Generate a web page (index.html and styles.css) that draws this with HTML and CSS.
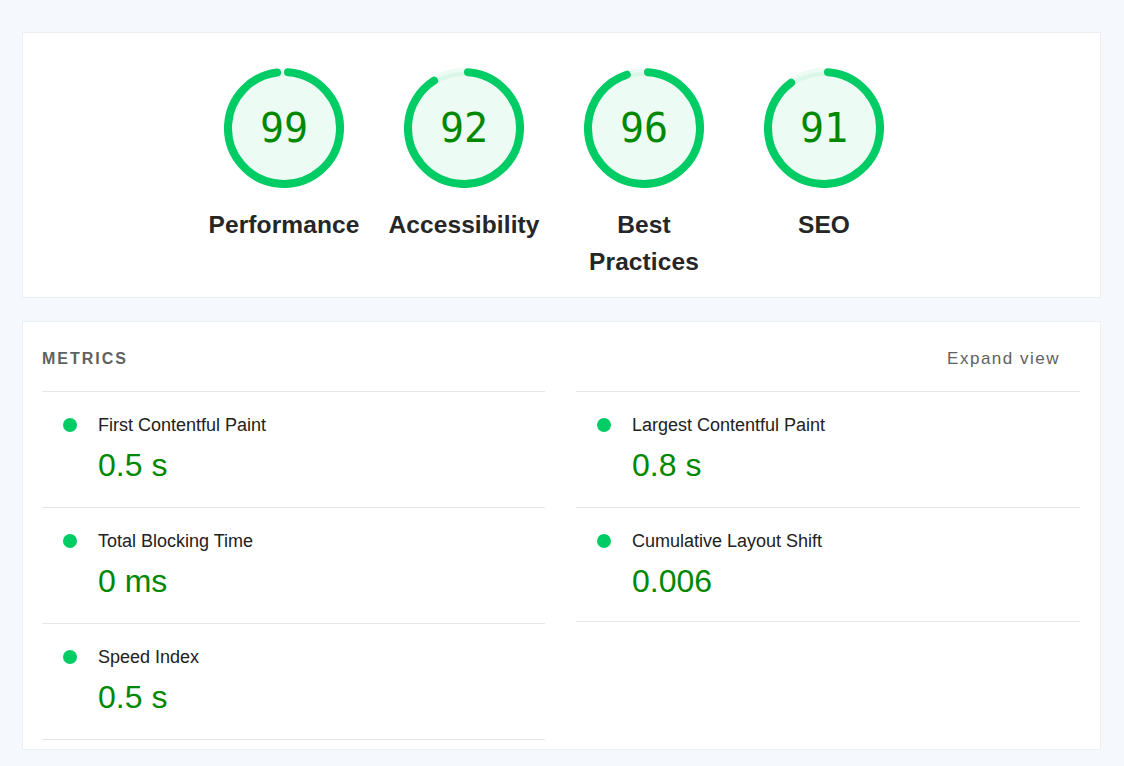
FILE: index.html
```html
<!DOCTYPE html>
<html lang="en">
<head>
<meta charset="utf-8">
<title>Lighthouse report</title>
<link rel="stylesheet" href="styles.css">
</head>
<body>
<div class="page">
  <section class="card scores">
    <div class="gauge">
      <svg class="ring" viewBox="0 0 120 120" width="120" height="120">
        <circle class="ring-base" cx="60" cy="60" r="56"></circle>
        <circle class="ring-arc" cx="60" cy="60" r="56" stroke-dasharray="340.34 351.86" transform="rotate(-85.9 60 60)"></circle>
        <text class="ring-num" x="60" y="60">99</text>
      </svg>
      <div class="gauge-label">Performance</div>
    </div>
    <div class="gauge">
      <svg class="ring" viewBox="0 0 120 120" width="120" height="120">
        <circle class="ring-base" cx="60" cy="60" r="56"></circle>
        <circle class="ring-arc" cx="60" cy="60" r="56" stroke-dasharray="315.71 351.86" transform="rotate(-85.9 60 60)"></circle>
        <text class="ring-num" x="60" y="60">92</text>
      </svg>
      <div class="gauge-label">Accessibility</div>
    </div>
    <div class="gauge">
      <svg class="ring" viewBox="0 0 120 120" width="120" height="120">
        <circle class="ring-base" cx="60" cy="60" r="56"></circle>
        <circle class="ring-arc" cx="60" cy="60" r="56" stroke-dasharray="329.78 351.86" transform="rotate(-85.9 60 60)"></circle>
        <text class="ring-num" x="60" y="60">96</text>
      </svg>
      <div class="gauge-label">Best Practices</div>
    </div>
    <div class="gauge">
      <svg class="ring" viewBox="0 0 120 120" width="120" height="120">
        <circle class="ring-base" cx="60" cy="60" r="56"></circle>
        <circle class="ring-arc" cx="60" cy="60" r="56" stroke-dasharray="312.19 351.86" transform="rotate(-85.9 60 60)"></circle>
        <text class="ring-num" x="60" y="60">91</text>
      </svg>
      <div class="gauge-label">SEO</div>
    </div>
  </section>

  <section class="card metrics">
    <header class="metrics-head">
      <h2 class="metrics-title">METRICS</h2>
      <span class="expand">Expand view</span>
    </header>
    <div class="metrics-grid">
      <div class="metric-col">
        <div class="metric">
          <span class="dot"></span>
          <div class="metric-label">First Contentful Paint</div>
          <div class="metric-value">0.5&nbsp;s</div>
        </div>
        <div class="metric">
          <span class="dot"></span>
          <div class="metric-label">Total Blocking Time</div>
          <div class="metric-value">0&nbsp;ms</div>
        </div>
        <div class="metric">
          <span class="dot"></span>
          <div class="metric-label">Speed Index</div>
          <div class="metric-value">0.5&nbsp;s</div>
        </div>
      </div>
      <div class="metric-col">
        <div class="metric">
          <span class="dot"></span>
          <div class="metric-label">Largest Contentful Paint</div>
          <div class="metric-value">0.8&nbsp;s</div>
        </div>
        <div class="metric metric-short">
          <span class="dot"></span>
          <div class="metric-label">Cumulative Layout Shift</div>
          <div class="metric-value">0.006</div>
        </div>
      </div>
    </div>
  </section>
</div>
</body>
</html>
```

FILE: styles.css
```css
* {
  box-sizing: border-box;
}

html, body {
  margin: 0;
  padding: 0;
}

body {
  background: #f5f9fd;
  font-family: "Liberation Sans", Arial, Helvetica, sans-serif;
  color: #212121;
  width: 1124px;
  height: 766px;
  overflow: hidden;
}

.page {
  padding: 32px 23px 0 22px;
  display: flex;
  flex-direction: column;
  gap: 23px;
}

.card {
  background: #ffffff;
  border: 1px solid #edf0f3;
}

/* ---- Score gauges ---- */
.scores {
  display: flex;
  justify-content: center;
  gap: 20px;
  padding: 35px 15px 17px 0;
}

.gauge {
  width: 160px;
  display: flex;
  flex-direction: column;
  align-items: center;
}

.ring {
  display: block;
  width: 120px;
  height: 120px;
}

.ring-base {
  fill: rgba(0, 204, 102, 0.075);
  stroke: rgba(0, 204, 102, 0.075);
  stroke-width: 8;
}

.ring-arc {
  fill: none;
  stroke: #0c6;
  stroke-width: 8;
  stroke-linecap: round;
}

.ring-num {
  font-family: "DejaVu Sans Mono", "Liberation Mono", monospace;
  font-size: 40px;
  fill: #080;
  text-anchor: middle;
  dominant-baseline: central;
}

.gauge-label {
  margin-top: 18px;
  font-size: 24.5px;
  line-height: 37px;
  font-weight: 700;
  text-align: center;
  color: #262626;
  letter-spacing: 0.1px;
}

/* ---- Metrics ---- */
.metrics {
  padding: 0 20px 9px 19px;
}

.metrics-head {
  display: flex;
  justify-content: space-between;
  align-items: center;
  padding: 27px 0 23px;
}

.metrics-title {
  margin: 0;
  font-size: 16px;
  line-height: 19px;
  font-weight: 700;
  letter-spacing: 2px;
  color: #616161;
}

.expand {
  font-size: 17px;
  line-height: 19px;
  letter-spacing: 1.5px;
  color: #616161;
  padding-right: 20px;
}

.metrics-grid {
  display: grid;
  grid-template-columns: 503px 1fr;
  column-gap: 31px;
  align-items: start;
}

.metric-col {
  border-bottom: 1px solid #e6e6e6;
}

.metric {
  display: grid;
  grid-template-columns: 14px 1fr;
  column-gap: 21px;
  align-items: center;
  padding: 21px 0 22px 21px;
  border-top: 1px solid #e6e6e6;
}

.metric-short {
  padding-bottom: 20px;
}

.dot {
  width: 14px;
  height: 14px;
  border-radius: 50%;
  background: #0c6;
  grid-row: 1;
  grid-column: 1;
}

.metric-label {
  grid-row: 1;
  grid-column: 2;
  font-size: 18px;
  line-height: 24px;
  color: #212121;
}

.metric-value {
  grid-row: 2;
  grid-column: 2;
  margin-top: 8px;
  font-size: 32px;
  line-height: 40px;
  color: #080;
}
```
